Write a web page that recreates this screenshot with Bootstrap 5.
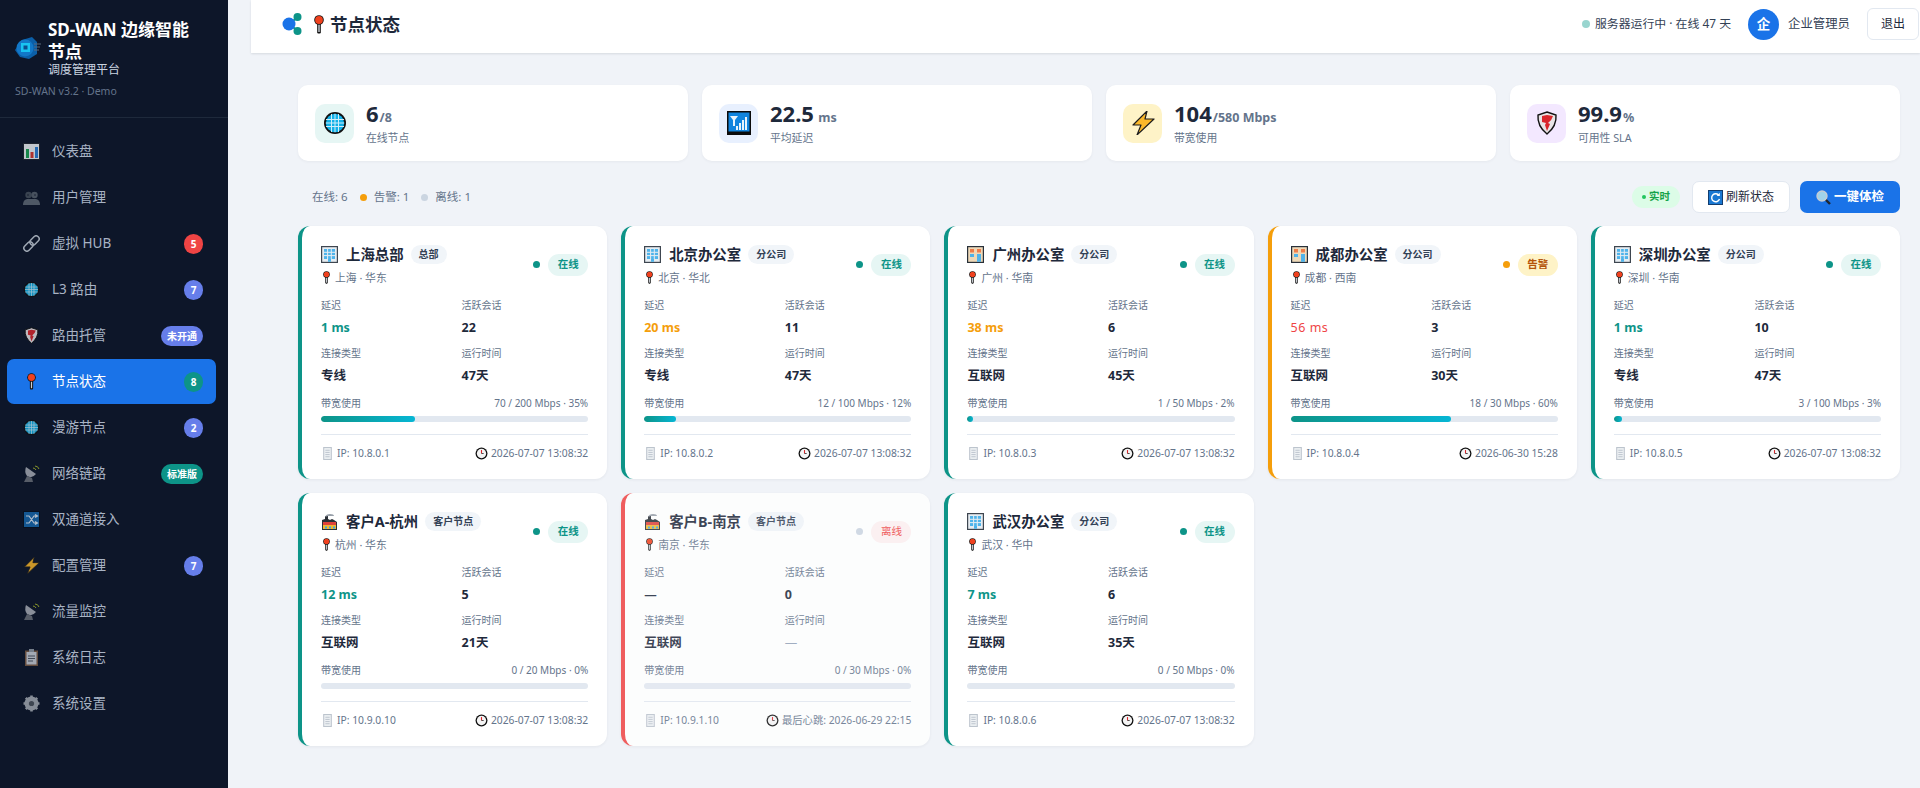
<!DOCTYPE html>
<html lang="zh-CN">
<head>
<meta charset="UTF-8">
<meta name="viewport" content="width=device-width, initial-scale=1.0">
<link href="https://cdn.jsdelivr.net/npm/bootstrap@5.3.3/dist/css/bootstrap.min.css" rel="stylesheet">
<title>节点状态</title>
<style>
body { background: #f0f3f8; font-family: "Noto Sans", "Noto Sans CJK SC", sans-serif; color: #1e293b; height: 788px; overflow: hidden; }
.side { width: 228px; height: 788px; background: #0d1629; flex: none; }
.brand { height: 118px; padding: 19px 15px 0; border-bottom: 1px solid #1e293b; }
.brand-logo { width: 27px; height: 24px; margin-right: 6px; flex: none; }
.brand-title { font-size: 17px; font-weight: 700; line-height: 22px; color: #fff; max-width: 155px; }
.brand-sub { font-size: 12px; line-height: 15px; color: #cbd5e1; margin-top: -1px; }
.brand-ver { font-size: 10.5px; line-height: 14px; color: #64748b; margin-top: 7px; }
.side-nav { padding: 11px 12px 0 7px; }
.side-item { height: 45px; margin-bottom: 1px; padding: 0 13px 0 16px; border-radius: 7px; font-size: 13.5px; color: #a8b3c4; text-decoration: none; }
.side-item.on { background: #1a73e8; color: #fff; }
.side-ico { width: 17px; height: 17px; margin-right: 12px; flex: none; opacity: .8; }
.side-item.on .side-ico { opacity: 1; }
.side-num, .side-tag { height: 20px; border-radius: 10px; font-size: 10px; font-weight: 700; color: #fff; line-height: 20px; text-align: center; }
.side-num { width: 19px; }
.side-tag { width: 42px; }
.bg-hub { background: #ef4444; }
.bg-ind { background: #667eea; }
.bg-grn { background: #0d9488; }
.main-wrap { margin-left: 23px; min-width: 0; }
.top-head { height: 53px; background: #fff; padding: 8px 1px 0 31px; box-shadow: 0 1px 2px rgba(30, 41, 59, .12); }
.top-row { height: 32px; }
.top-logo { width: 20px; height: 22px; margin-right: 9px; }
.top-pin { width: 16px; height: 19px; margin-right: 3px; }
.top-title { font-size: 17.5px; font-weight: 700; }
.srv-dot { width: 8px; height: 8px; border-radius: 50%; background: #99d5cf; margin-right: 5px; }
.srv-text { font-size: 11.9px; color: #334155; margin-right: 17px; }
.avatar { width: 31px; height: 31px; border-radius: 50%; background: #1a73e8; color: #fff; font-size: 13.5px; font-weight: 700; margin-right: 9px; }
.user-name { font-size: 12.4px; color: #334155; margin-right: 17px; }
.btn-quit { width: 52px; height: 32px; padding: 0; font-size: 12px; background: #fff; border: 1px solid #e2e8f0; color: #1e293b; border-radius: 6px; }
.content-box { padding: 32px 20px 0 47px; }
.stat-grid { display: grid; grid-template-columns: repeat(4, 1fr); gap: 14px; }
.stat-box { height: 76px; background: #fff; border-radius: 10px; padding: 0 17px; box-shadow: 0 1px 3px rgba(30, 41, 59, .05); }
.stat-ico { width: 39px; height: 39px; border-radius: 10px; margin-right: 12px; }
.stat-ico svg { width: 24px; height: 24px; }
.stat-txt { padding-bottom: 3px; }
.stat-val { font-size: 22px; font-weight: 700; line-height: 28px; color: #1e293b; margin-bottom: 4px; }
.stat-val span { font-size: 12.5px; line-height: 1; color: #64748b; margin-left: 1px; }
.stat-lbl { font-size: 10.8px; line-height: 14px; color: #64748b; }
.tool-row { height: 20px; margin-top: 26px; margin-bottom: 19px; padding-left: 14px; }
.sum-text { font-size: 11.5px; color: #64748b; }
.sum-dot { width: 7px; height: 7px; border-radius: 50%; margin: 0 7px 0 12px; }
.live-tag { height: 22px; width: 48px; border-radius: 11px; background: #dcfce7; color: #16a34a; font-size: 10.5px; font-weight: 700; margin-right: 12px; }
.live-dot { width: 4px; height: 4px; border-radius: 50%; background: #22c55e; margin-right: 3px; }
.btn-fresh, .btn-scan { height: 32px; padding: 0; font-size: 12px; border-radius: 7px; }
.btn-fresh { width: 98px; background: #fff; border: 1px solid #e2e8f0; color: #1e293b; margin-right: 10px; }
.btn-scan { width: 100px; background: #1a73e8; border: 0; color: #fff; font-weight: 700; font-size: 12.5px; }
.btn-ico { width: 15px; height: 15px; margin-right: 3px; }
.node-grid { display: grid; grid-template-columns: repeat(5, 1fr); gap: 14px; }
.node-box { height: 253px; background: #fff; border-left: 4px solid #0d9488; border-radius: 12px; padding: 18px 19px 0 19px; box-shadow: 0 1px 3px rgba(30, 41, 59, .06); }
.node-box.warn { border-left-color: #f59e0b; }
.node-box.down { border-left-color: #ef4444; opacity: .85; }
.node-top { height: 41px; }
.node-ico { width: 17px; height: 17px; margin-right: 8px; flex: none; }
.node-name { font-size: 14.4px; font-weight: 700; line-height: 20px; }
.node-kind { font-size: 10px; font-weight: 700; line-height: 19px; padding: 0 8px; margin-left: 7px; border-radius: 10px; background: #f1f5f9; color: #334155; }
.node-loc { font-size: 10.8px; line-height: 14px; color: #64748b; margin-top: 6px; }
.loc-pin { width: 11px; height: 13px; margin-right: 3px; }
.state-dot { width: 7px; height: 7px; border-radius: 50%; margin-right: 8px; }
.state-tag { width: 40px; height: 22px; border-radius: 11px; font-size: 10.5px; font-weight: 700; }
.st-on { background: #e6f6f4; color: #0d9488; }
.st-warn { background: #fef3c7; color: #b45309; }
.st-down { background: #fef0f0; color: #ef4444; font-weight: 400; }
.metric-grid { display: grid; grid-template-columns: 1fr 1fr; column-gap: 14px; margin-top: 13px; }
.m-lbl { font-size: 10px; line-height: 14px; color: #64748b; }
.m-val { font-size: 12.5px; font-weight: 700; line-height: 16px; margin: 8px 0 10px; color: #1e293b; }
.m-val.good { color: #0d9488; }
.m-val.mid { color: #f59e0b; }
.m-val.bad { color: #ef4444; font-weight: 400; letter-spacing: .5px; }
.m-val.mute { color: #94a3b8; font-weight: 400; }
.bw-text { font-size: 10px; line-height: 14px; color: #64748b; margin-top: 2px; }
.bw-track { height: 6px; margin: 6px 0 0; background: #e2e8f0; border-radius: 3px; }
.bw-track .progress-bar { background: linear-gradient(90deg, #0d9488, #06b6d4); border-radius: 3px; }
.node-foot { margin-top: 12px; border-top: 1px solid #e2e8f0; padding-top: 10px; font-size: 10.3px; line-height: 16px; color: #64748b; }
.foot-ico { width: 13px; height: 13px; margin-right: 3px; vertical-align: -2.5px; }
</style>
</head>
<body>
<svg width="0" height="0" class="position-absolute">
  <symbol id="i-chip" viewBox="0 0 27 24"><path d="M7 4 L17 1 L22 6 L22 18 L14 23 L5 21 L0 14 Z" fill="#0b5fa8"/><circle cx="10" cy="12" r="8.500" fill="#1278c8"/><rect x="6" y="7" width="9" height="9" fill="#19c3f2"/><rect x="8.500" y="9.500" width="4" height="4" fill="#0b4f8f"/><path d="M19 8h7M19 11h6M19 14h5" stroke="#5a6a7e" stroke-width="1.200"/></symbol>
  <symbol id="i-chart" viewBox="0 0 17 17"><rect width="17" height="17" fill="#20262f"/><rect x="1" y="1" width="15" height="15" fill="#eef2f5"/><rect x="3" y="6" width="3" height="9" fill="#1aa351"/><rect x="7.500" y="9" width="3" height="6" fill="#d83a2e"/><rect x="12" y="4" width="3" height="11" fill="#2a7fd6"/></symbol>
  <symbol id="i-users" viewBox="0 0 17 17"><circle cx="5.500" cy="6" r="3.200" fill="#46505c"/><circle cx="11.500" cy="6" r="3.200" fill="#56606c"/><path d="M0 16c0-4 2-6 5-6h7c3 0 5 2 5 6z" fill="#5f6975"/><circle cx="5" cy="6" r=".7" fill="#0d1629"/><circle cx="12" cy="6" r=".7" fill="#0d1629"/></symbol>
  <symbol id="i-link" viewBox="0 0 17 17"><g fill="none" stroke="#c3ccd6" stroke-width="1.500" transform="rotate(-45 8.500 8.500)"><rect x="-1" y="5.500" width="10.500" height="6" rx="3"/><rect x="7.500" y="5.500" width="10.500" height="6" rx="3"/></g></symbol>
  <symbol id="i-globe" viewBox="0 0 24 24"><circle cx="12" cy="12" r="11" fill="#111"/><circle cx="12" cy="12" r="9.200" fill="#12b1e8"/><path d="M3 8.500h18M2.800 12h18.400M3 15.500h18M8.500 3v18M12 2.800v18.400M15.500 3v18" stroke="#cfeefa" stroke-width="1"/></symbol>
  <symbol id="i-shield" viewBox="0 0 24 24"><path d="M12 1 L21 4 Q22 15 12 23 Q2 15 3 4 Z" fill="#e8e4e6" stroke="#111" stroke-width="1.400"/><path d="M12 4 L18 5 Q17 9 13 12 L15 13 L12 20 L10 14 L11 12 L7 11 L7 5 Z" fill="#d9262c"/></symbol>
  <symbol id="i-pin" viewBox="0 0 11 19"><rect x="3.700" y="7" width="3.600" height="11.500" rx="1.200" fill="#111"/><rect x="4.800" y="9" width="1.400" height="8" fill="#c9ced4"/><circle cx="5.500" cy="5" r="4.800" fill="#111"/><circle cx="5.500" cy="5" r="3.900" fill="#f0411e"/></symbol>
  <symbol id="i-dish" viewBox="0 0 17 17"><path d="M3 2 L13 9 Q9 14 4 11 Q1 7 3 2Z" fill="#a8adb5"/><path d="M1 17 L4 11 L9 13 L10 17Z" fill="#6a6f78"/><path d="M10 3q2 0 3 2M12 1q3 0 4 3" stroke="#a5b52c" stroke-width="1" fill="none"/></symbol>
  <symbol id="i-shuffle" viewBox="0 0 17 17"><rect width="17" height="17" fill="#06101f"/><rect x="1" y="1" width="15" height="15" fill="#1668ad"/><path d="M3 5h3l5 7h3M3 12h3l5-7h3M12 3.500 14.500 5 12 6.500M12 10.500 14.500 12 12 13.500" fill="none" stroke="#dbe8f4" stroke-width="1.200"/></symbol>
  <symbol id="i-bolt" viewBox="0 0 24 24"><path d="M16 0 L2 14 H10 L6 24 L23 8 H14 Z" fill="#fbb82a" stroke="#1d1d1d" stroke-width="1.200" stroke-linejoin="round"/></symbol>
  <symbol id="i-clip" viewBox="0 0 17 17"><rect x="2" y="1.500" width="13" height="15.500" fill="#7a5b44"/><rect x="3.500" y="3" width="10" height="12.500" fill="#c9ced6"/><rect x="6" y="0" width="5" height="3" fill="#8f98a3"/><path d="M5 7h7M5 9.500h7M5 12h5" stroke="#4d5561" stroke-width="1"/></symbol>
  <symbol id="i-gear" viewBox="0 0 17 17"><circle cx="8.500" cy="8.500" r="5" fill="none" stroke="#a5abb3" stroke-width="4"/><path d="M8.500 .5v16M.5 8.500h16M2.800 2.800l11.400 11.400M14.200 2.800 2.800 14.200" stroke="#a5abb3" stroke-width="2.600"/><circle cx="8.500" cy="8.500" r="2.600" fill="#4b525c"/></symbol>
  <symbol id="i-office" viewBox="0 0 17 17"><rect width="17" height="17" fill="#3e4650"/><rect x="1.200" y="1.200" width="14.600" height="14.600" fill="#e6edf2"/><rect x="3" y="3" width="11" height="10" fill="#4fb3ea"/><path d="M3 6.300h11M3 9.600h11M6.600 3v10M10.300 3v10" stroke="#e6edf2"/><rect x="7" y="13" width="3" height="2.800" fill="#4fb3ea"/></symbol>
  <symbol id="i-dept" viewBox="0 0 17 17"><rect width="17" height="17" fill="#28303a"/><rect x="1.200" y="1.200" width="14.600" height="14.600" fill="#eed9b8"/><rect x="3" y="3" width="4" height="3.500" fill="#ef7d4a"/><rect x="10" y="3" width="4" height="3.500" fill="#ef7d4a"/><rect x="3" y="8" width="4" height="3" fill="#4fb3ea"/><rect x="10" y="8" width="4" height="7.800" fill="#4fb3ea"/></symbol>
  <symbol id="i-factory" viewBox="0 0 17 17"><path d="M1 17V7l3-1V3h3v3l2 1 2-1 2 1 3 2v8z" fill="#2a2f36"/><path d="M2 9h13v3H2z" fill="#e0423a"/><path d="M2 12h13v4H2z" fill="#f1b631"/><path d="M4 13.500h2v2H4zM8 13.500h2v2H8zM12 13.500h2v2h-2z" fill="#3ea5e0"/><path d="M4 4q1-3 5-3t4 2H7z" fill="#98a0a9"/></symbol>
  <symbol id="i-pager" viewBox="0 0 12 12"><rect x="2" y="0" width="8" height="12" fill="#bcc4cd"/><rect x="3" y="1" width="6" height="10" fill="#eef1f4"/><path d="M4 3h4M4 5h4M4 7h4M4 9h4" stroke="#b6bec8" stroke-width=".8"/></symbol>
  <symbol id="i-clock" viewBox="0 0 12 12"><circle cx="6" cy="6" r="5.500" fill="#111"/><circle cx="6" cy="6" r="4.300" fill="#f4f4f4"/><path d="M6 6V2.800" stroke="#d9262c" stroke-width="1"/><path d="M6 6H8" stroke="#333" stroke-width=".8"/></symbol>
  <symbol id="i-refresh" viewBox="0 0 15 15"><rect width="15" height="15" fill="#123d6f"/><rect x="1" y="1" width="13" height="13" fill="#1a78d2"/><path d="M11 5.500A4 4 0 1 0 11.500 9" fill="none" stroke="#fff" stroke-width="1.400"/><path d="M11.800 2.800V6H8.700z" fill="#fff"/></symbol>
  <symbol id="i-search" viewBox="0 0 15 15"><path d="M9 9l5 5" stroke="#20262f" stroke-width="2.400"/><circle cx="6" cy="6" r="5" fill="#9fd2ea" stroke="#c6ccd4" stroke-width="1.400"/></symbol>
  <symbol id="i-signal" viewBox="0 0 24 24"><rect width="24" height="24" fill="#0b0b0b"/><rect x="1.500" y="1.500" width="21" height="19" fill="#1084de"/><path d="M3 5h8L8 9v6H6V9z" fill="#e9f4fc"/><path d="M9 15h2v4H9zM12 12h2v7h-2zM15 9h2v10h-2zM18 6h2v13h-2z" fill="#e9f4fc"/></symbol>
</svg>
<div class="d-flex">
  <aside class="side">
    <div class="brand">
      <div class="d-flex align-items-center">
        <svg class="brand-logo"><use href="#i-chip"/></svg>
        <div>
          <div class="brand-title">SD-WAN 边缘智能节点</div>
          <div class="brand-sub">调度管理平台</div>
        </div>
      </div>
      <div class="brand-ver">SD-WAN v3.2 · Demo</div>
    </div>
    <nav class="side-nav">
      <a class="side-item d-flex align-items-center" href="#"><svg class="side-ico"><use href="#i-chart"/></svg><span class="flex-grow-1">仪表盘</span></a>
      <a class="side-item d-flex align-items-center" href="#"><svg class="side-ico"><use href="#i-users"/></svg><span class="flex-grow-1">用户管理</span></a>
      <a class="side-item d-flex align-items-center" href="#"><svg class="side-ico"><use href="#i-link"/></svg><span class="flex-grow-1">虚拟 HUB</span><span class="side-num bg-hub">5</span></a>
      <a class="side-item d-flex align-items-center" href="#"><svg class="side-ico"><use href="#i-globe"/></svg><span class="flex-grow-1">L3 路由</span><span class="side-num bg-ind">7</span></a>
      <a class="side-item d-flex align-items-center" href="#"><svg class="side-ico"><use href="#i-shield"/></svg><span class="flex-grow-1">路由托管</span><span class="side-tag bg-ind">未开通</span></a>
      <a class="side-item on d-flex align-items-center" href="#"><svg class="side-ico"><use href="#i-pin"/></svg><span class="flex-grow-1">节点状态</span><span class="side-num bg-grn">8</span></a>
      <a class="side-item d-flex align-items-center" href="#"><svg class="side-ico"><use href="#i-globe"/></svg><span class="flex-grow-1">漫游节点</span><span class="side-num bg-ind">2</span></a>
      <a class="side-item d-flex align-items-center" href="#"><svg class="side-ico"><use href="#i-dish"/></svg><span class="flex-grow-1">网络链路</span><span class="side-tag bg-grn">标准版</span></a>
      <a class="side-item d-flex align-items-center" href="#"><svg class="side-ico"><use href="#i-shuffle"/></svg><span class="flex-grow-1">双通道接入</span></a>
      <a class="side-item d-flex align-items-center" href="#"><svg class="side-ico"><use href="#i-bolt"/></svg><span class="flex-grow-1">配置管理</span><span class="side-num bg-ind">7</span></a>
      <a class="side-item d-flex align-items-center" href="#"><svg class="side-ico"><use href="#i-dish"/></svg><span class="flex-grow-1">流量监控</span></a>
      <a class="side-item d-flex align-items-center" href="#"><svg class="side-ico"><use href="#i-clip"/></svg><span class="flex-grow-1">系统日志</span></a>
      <a class="side-item d-flex align-items-center" href="#"><svg class="side-ico"><use href="#i-gear"/></svg><span class="flex-grow-1">系统设置</span></a>
    </nav>
  </aside>
  <div class="main-wrap flex-grow-1">
    <header class="top-head">
      <div class="top-row d-flex align-items-center">
        <svg class="top-logo" viewBox="0 0 20 22"><path d="M7 11 16 4M7 11l9 7" stroke="#0d9488" stroke-width="2"/><circle cx="15.500" cy="4" r="4" fill="#0d9488"/><circle cx="15.500" cy="18" r="4" fill="#0d9488"/><circle cx="7" cy="11" r="6.500" fill="#1a73e8"/></svg>
        <svg class="top-pin"><use href="#i-pin"/></svg>
        <span class="top-title flex-grow-1">节点状态</span>
        <span class="srv-dot"></span>
        <span class="srv-text">服务器运行中 · 在线 47 天</span>
        <span class="avatar d-flex align-items-center justify-content-center">企</span>
        <span class="user-name">企业管理员</span>
        <button class="btn btn-quit">退出</button>
      </div>
    </header>
    <div class="content-box">
      <div class="stat-grid">
        <div class="stat-box d-flex align-items-center">
          <div class="stat-ico d-flex align-items-center justify-content-center" style="background:#e6f6f4"><svg><use href="#i-globe"/></svg></div>
          <div class="stat-txt"><div class="stat-val">6<span>/8</span></div><div class="stat-lbl">在线节点</div></div>
        </div>
        <div class="stat-box d-flex align-items-center">
          <div class="stat-ico d-flex align-items-center justify-content-center" style="background:#e8f0fe"><svg><use href="#i-signal"/></svg></div>
          <div class="stat-txt"><div class="stat-val">22.5<span> ms</span></div><div class="stat-lbl">平均延迟</div></div>
        </div>
        <div class="stat-box d-flex align-items-center">
          <div class="stat-ico d-flex align-items-center justify-content-center" style="background:#fef3c7"><svg><use href="#i-bolt"/></svg></div>
          <div class="stat-txt"><div class="stat-val">104<span>/580 Mbps</span></div><div class="stat-lbl">带宽使用</div></div>
        </div>
        <div class="stat-box d-flex align-items-center">
          <div class="stat-ico d-flex align-items-center justify-content-center" style="background:#f3e8ff"><svg><use href="#i-shield"/></svg></div>
          <div class="stat-txt"><div class="stat-val">99.9<span>%</span></div><div class="stat-lbl">可用性 SLA</div></div>
        </div>
      </div>
      <div class="tool-row d-flex align-items-center">
        <span class="sum-text">在线: 6</span><span class="sum-dot" style="background:#f59e0b"></span><span class="sum-text">告警: 1</span><span class="sum-dot" style="background:#cbd5e1"></span><span class="sum-text">离线: 1</span>
        <span class="flex-grow-1"></span>
        <span class="live-tag d-flex align-items-center justify-content-center"><span class="live-dot"></span>实时</span>
        <button class="btn btn-fresh d-flex align-items-center justify-content-center"><svg class="btn-ico"><use href="#i-refresh"/></svg>刷新状态</button>
        <button class="btn btn-scan d-flex align-items-center justify-content-center"><svg class="btn-ico"><use href="#i-search"/></svg>一键体检</button>
      </div>
      <div class="node-grid">

        <div class="node-box">
          <div class="node-top d-flex justify-content-between align-items-center">
            <div><div class="d-flex align-items-center"><svg class="node-ico"><use href="#i-office"/></svg><span class="node-name">上海总部</span><span class="node-kind">总部</span></div>
            <div class="node-loc d-flex align-items-center"><svg class="loc-pin"><use href="#i-pin"/></svg>上海 · 华东</div></div>
            <div class="d-flex align-items-center"><span class="state-dot bg-grn"></span><span class="state-tag st-on d-flex align-items-center justify-content-center">在线</span></div>
          </div>
          <div class="metric-grid">
            <div><div class="m-lbl">延迟</div><div class="m-val good">1 ms</div></div>
            <div><div class="m-lbl">活跃会话</div><div class="m-val">22</div></div>
            <div><div class="m-lbl">连接类型</div><div class="m-val">专线</div></div>
            <div><div class="m-lbl">运行时间</div><div class="m-val">47天</div></div>
          </div>
          <div class="bw-text d-flex justify-content-between"><span>带宽使用</span><span>70 / 200 Mbps · 35%</span></div>
          <div class="progress bw-track"><div class="progress-bar" style="width:35%"></div></div>
          <div class="node-foot d-flex justify-content-between"><span><svg class="foot-ico"><use href="#i-pager"/></svg>IP: 10.8.0.1</span><span><svg class="foot-ico"><use href="#i-clock"/></svg>2026-07-07 13:08:32</span></div>
        </div>

        <div class="node-box">
          <div class="node-top d-flex justify-content-between align-items-center">
            <div><div class="d-flex align-items-center"><svg class="node-ico"><use href="#i-office"/></svg><span class="node-name">北京办公室</span><span class="node-kind">分公司</span></div>
            <div class="node-loc d-flex align-items-center"><svg class="loc-pin"><use href="#i-pin"/></svg>北京 · 华北</div></div>
            <div class="d-flex align-items-center"><span class="state-dot bg-grn"></span><span class="state-tag st-on d-flex align-items-center justify-content-center">在线</span></div>
          </div>
          <div class="metric-grid">
            <div><div class="m-lbl">延迟</div><div class="m-val mid">20 ms</div></div>
            <div><div class="m-lbl">活跃会话</div><div class="m-val">11</div></div>
            <div><div class="m-lbl">连接类型</div><div class="m-val">专线</div></div>
            <div><div class="m-lbl">运行时间</div><div class="m-val">47天</div></div>
          </div>
          <div class="bw-text d-flex justify-content-between"><span>带宽使用</span><span>12 / 100 Mbps · 12%</span></div>
          <div class="progress bw-track"><div class="progress-bar" style="width:12%"></div></div>
          <div class="node-foot d-flex justify-content-between"><span><svg class="foot-ico"><use href="#i-pager"/></svg>IP: 10.8.0.2</span><span><svg class="foot-ico"><use href="#i-clock"/></svg>2026-07-07 13:08:32</span></div>
        </div>

        <div class="node-box">
          <div class="node-top d-flex justify-content-between align-items-center">
            <div><div class="d-flex align-items-center"><svg class="node-ico"><use href="#i-dept"/></svg><span class="node-name">广州办公室</span><span class="node-kind">分公司</span></div>
            <div class="node-loc d-flex align-items-center"><svg class="loc-pin"><use href="#i-pin"/></svg>广州 · 华南</div></div>
            <div class="d-flex align-items-center"><span class="state-dot bg-grn"></span><span class="state-tag st-on d-flex align-items-center justify-content-center">在线</span></div>
          </div>
          <div class="metric-grid">
            <div><div class="m-lbl">延迟</div><div class="m-val mid">38 ms</div></div>
            <div><div class="m-lbl">活跃会话</div><div class="m-val">6</div></div>
            <div><div class="m-lbl">连接类型</div><div class="m-val">互联网</div></div>
            <div><div class="m-lbl">运行时间</div><div class="m-val">45天</div></div>
          </div>
          <div class="bw-text d-flex justify-content-between"><span>带宽使用</span><span>1 / 50 Mbps · 2%</span></div>
          <div class="progress bw-track"><div class="progress-bar" style="width:2%"></div></div>
          <div class="node-foot d-flex justify-content-between"><span><svg class="foot-ico"><use href="#i-pager"/></svg>IP: 10.8.0.3</span><span><svg class="foot-ico"><use href="#i-clock"/></svg>2026-07-07 13:08:32</span></div>
        </div>

        <div class="node-box warn">
          <div class="node-top d-flex justify-content-between align-items-center">
            <div><div class="d-flex align-items-center"><svg class="node-ico"><use href="#i-dept"/></svg><span class="node-name">成都办公室</span><span class="node-kind">分公司</span></div>
            <div class="node-loc d-flex align-items-center"><svg class="loc-pin"><use href="#i-pin"/></svg>成都 · 西南</div></div>
            <div class="d-flex align-items-center"><span class="state-dot" style="background:#f59e0b"></span><span class="state-tag st-warn d-flex align-items-center justify-content-center">告警</span></div>
          </div>
          <div class="metric-grid">
            <div><div class="m-lbl">延迟</div><div class="m-val bad">56 ms</div></div>
            <div><div class="m-lbl">活跃会话</div><div class="m-val">3</div></div>
            <div><div class="m-lbl">连接类型</div><div class="m-val">互联网</div></div>
            <div><div class="m-lbl">运行时间</div><div class="m-val">30天</div></div>
          </div>
          <div class="bw-text d-flex justify-content-between"><span>带宽使用</span><span>18 / 30 Mbps · 60%</span></div>
          <div class="progress bw-track"><div class="progress-bar" style="width:60%"></div></div>
          <div class="node-foot d-flex justify-content-between"><span><svg class="foot-ico"><use href="#i-pager"/></svg>IP: 10.8.0.4</span><span><svg class="foot-ico"><use href="#i-clock"/></svg>2026-06-30 15:28</span></div>
        </div>

        <div class="node-box">
          <div class="node-top d-flex justify-content-between align-items-center">
            <div><div class="d-flex align-items-center"><svg class="node-ico"><use href="#i-office"/></svg><span class="node-name">深圳办公室</span><span class="node-kind">分公司</span></div>
            <div class="node-loc d-flex align-items-center"><svg class="loc-pin"><use href="#i-pin"/></svg>深圳 · 华南</div></div>
            <div class="d-flex align-items-center"><span class="state-dot bg-grn"></span><span class="state-tag st-on d-flex align-items-center justify-content-center">在线</span></div>
          </div>
          <div class="metric-grid">
            <div><div class="m-lbl">延迟</div><div class="m-val good">1 ms</div></div>
            <div><div class="m-lbl">活跃会话</div><div class="m-val">10</div></div>
            <div><div class="m-lbl">连接类型</div><div class="m-val">专线</div></div>
            <div><div class="m-lbl">运行时间</div><div class="m-val">47天</div></div>
          </div>
          <div class="bw-text d-flex justify-content-between"><span>带宽使用</span><span>3 / 100 Mbps · 3%</span></div>
          <div class="progress bw-track"><div class="progress-bar" style="width:3%"></div></div>
          <div class="node-foot d-flex justify-content-between"><span><svg class="foot-ico"><use href="#i-pager"/></svg>IP: 10.8.0.5</span><span><svg class="foot-ico"><use href="#i-clock"/></svg>2026-07-07 13:08:32</span></div>
        </div>

        <div class="node-box">
          <div class="node-top d-flex justify-content-between align-items-center">
            <div><div class="d-flex align-items-center"><svg class="node-ico"><use href="#i-factory"/></svg><span class="node-name">客户A-杭州</span><span class="node-kind">客户节点</span></div>
            <div class="node-loc d-flex align-items-center"><svg class="loc-pin"><use href="#i-pin"/></svg>杭州 · 华东</div></div>
            <div class="d-flex align-items-center"><span class="state-dot bg-grn"></span><span class="state-tag st-on d-flex align-items-center justify-content-center">在线</span></div>
          </div>
          <div class="metric-grid">
            <div><div class="m-lbl">延迟</div><div class="m-val good">12 ms</div></div>
            <div><div class="m-lbl">活跃会话</div><div class="m-val">5</div></div>
            <div><div class="m-lbl">连接类型</div><div class="m-val">互联网</div></div>
            <div><div class="m-lbl">运行时间</div><div class="m-val">21天</div></div>
          </div>
          <div class="bw-text d-flex justify-content-between"><span>带宽使用</span><span>0 / 20 Mbps · 0%</span></div>
          <div class="progress bw-track"><div class="progress-bar" style="width:0%"></div></div>
          <div class="node-foot d-flex justify-content-between"><span><svg class="foot-ico"><use href="#i-pager"/></svg>IP: 10.9.0.10</span><span><svg class="foot-ico"><use href="#i-clock"/></svg>2026-07-07 13:08:32</span></div>
        </div>

        <div class="node-box down">
          <div class="node-top d-flex justify-content-between align-items-center">
            <div><div class="d-flex align-items-center"><svg class="node-ico"><use href="#i-factory"/></svg><span class="node-name">客户B-南京</span><span class="node-kind">客户节点</span></div>
            <div class="node-loc d-flex align-items-center"><svg class="loc-pin"><use href="#i-pin"/></svg>南京 · 华东</div></div>
            <div class="d-flex align-items-center"><span class="state-dot" style="background:#cbd5e1"></span><span class="state-tag st-down d-flex align-items-center justify-content-center">离线</span></div>
          </div>
          <div class="metric-grid">
            <div><div class="m-lbl">延迟</div><div class="m-val">—</div></div>
            <div><div class="m-lbl">活跃会话</div><div class="m-val">0</div></div>
            <div><div class="m-lbl">连接类型</div><div class="m-val">互联网</div></div>
            <div><div class="m-lbl">运行时间</div><div class="m-val mute">—</div></div>
          </div>
          <div class="bw-text d-flex justify-content-between"><span>带宽使用</span><span>0 / 30 Mbps · 0%</span></div>
          <div class="progress bw-track"><div class="progress-bar" style="width:0%"></div></div>
          <div class="node-foot d-flex justify-content-between"><span><svg class="foot-ico"><use href="#i-pager"/></svg>IP: 10.9.1.10</span><span><svg class="foot-ico"><use href="#i-clock"/></svg>最后心跳: 2026-06-29 22:15</span></div>
        </div>

        <div class="node-box">
          <div class="node-top d-flex justify-content-between align-items-center">
            <div><div class="d-flex align-items-center"><svg class="node-ico"><use href="#i-office"/></svg><span class="node-name">武汉办公室</span><span class="node-kind">分公司</span></div>
            <div class="node-loc d-flex align-items-center"><svg class="loc-pin"><use href="#i-pin"/></svg>武汉 · 华中</div></div>
            <div class="d-flex align-items-center"><span class="state-dot bg-grn"></span><span class="state-tag st-on d-flex align-items-center justify-content-center">在线</span></div>
          </div>
          <div class="metric-grid">
            <div><div class="m-lbl">延迟</div><div class="m-val good">7 ms</div></div>
            <div><div class="m-lbl">活跃会话</div><div class="m-val">6</div></div>
            <div><div class="m-lbl">连接类型</div><div class="m-val">互联网</div></div>
            <div><div class="m-lbl">运行时间</div><div class="m-val">35天</div></div>
          </div>
          <div class="bw-text d-flex justify-content-between"><span>带宽使用</span><span>0 / 50 Mbps · 0%</span></div>
          <div class="progress bw-track"><div class="progress-bar" style="width:0%"></div></div>
          <div class="node-foot d-flex justify-content-between"><span><svg class="foot-ico"><use href="#i-pager"/></svg>IP: 10.8.0.6</span><span><svg class="foot-ico"><use href="#i-clock"/></svg>2026-07-07 13:08:32</span></div>
        </div>

      </div>
    </div>
  </div>
</div>
<script src="https://cdn.jsdelivr.net/npm/bootstrap@5.3.3/dist/js/bootstrap.bundle.min.js"></script>
</body>
</html>
